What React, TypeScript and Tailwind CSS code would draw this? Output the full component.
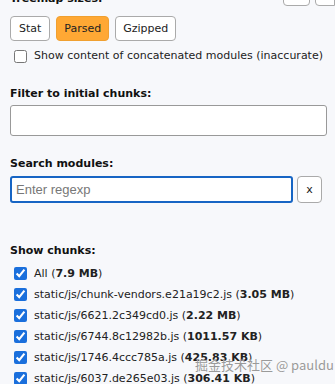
import React from 'react';

const chunks = [
  { label: 'All', size: '7.9 MB' },
  { label: 'static/js/chunk-vendors.e21a19c2.js', size: '3.05 MB' },
  { label: 'static/js/6621.2c349cd0.js', size: '2.22 MB' },
  { label: 'static/js/6744.8c12982b.js', size: '1011.57 KB' },
  { label: 'static/js/1746.4ccc785a.js', size: '425.83 KB' },
  { label: 'static/js/6037.de265e03.js', size: '306.41 KB' },
];

function Heading({ children }: { children: React.ReactNode }) {
  return <div className="font-bold text-[#111]">{children}</div>;
}

export default function App() {
  return (
    <div className="relative h-[384px] w-[335px] overflow-hidden bg-[#f7f8fb] px-[10px] font-['DejaVu_Sans',sans-serif] text-[11px] leading-[14px] text-[#222]">
      <div className="-mt-[16px] flex items-end justify-between">
        <Heading>Treemap sizes:</Heading>
        <div className="-mr-[10px] flex gap-[5px]">
          <div className="h-[22px] w-[27px] rounded-[4px] border border-[#aaa] bg-white" />
          <div className="h-[22px] w-[20px] rounded-l-[4px] border border-[#aaa] bg-white" />
        </div>
      </div>

      <div className="mt-[10px] flex gap-[6px]">
        <button className="h-[25px] rounded-[4px] border border-[#aaa] bg-white px-[8px] text-[#222]">Stat</button>
        <button className="h-[25px] rounded-[4px] border border-[#f0a030] bg-[#ffa834] px-[7px] text-[#222]">Parsed</button>
        <button className="h-[25px] rounded-[4px] border border-[#aaa] bg-white px-[7px] text-[#222]">Gzipped</button>
      </div>

      <label className="mt-[8px] flex items-center gap-[7px] pl-[4px]">
        <input type="checkbox" className="m-0 h-[13px] w-[13px]" />
        <span>Show content of concatenated modules (inaccurate)</span>
      </label>

      <div className="mt-[24px]">
        <Heading>Filter to initial chunks:</Heading>
        <input className="mt-[4px] h-[31px] w-[317px] rounded-[3px] border border-[#999] bg-white px-[5px]" />
      </div>

      <div className="mt-[21px]">
        <Heading>Search modules:</Heading>
        <div className="mt-[5px] flex gap-[4px]">
          <input
            placeholder="Enter regexp"
            className="h-[27px] w-[283px] rounded-[3px] border-2 border-[#1765c4] bg-white px-[4px] font-['Liberation_Sans',sans-serif] text-[13px] placeholder:text-[#777] focus:outline-none"
          />
          <button className="h-[27px] w-[25px] rounded-[4px] border border-[#aaa] bg-white text-[11px] text-[#222]">x</button>
        </div>
      </div>

      <div className="mt-[41px]">
        <Heading>Show chunks:</Heading>
        <div className="mt-[5px] flex flex-col">
          {chunks.map((c) => (
            <label key={c.label} className="flex h-[21px] items-center gap-[7px] pl-[4px]">
              <input type="checkbox" defaultChecked className="m-0 h-[13px] w-[13px] accent-[#1a6fdc]" />
              <span>
                {c.label} (<b>{c.size}</b>)
              </span>
            </label>
          ))}
        </div>
      </div>

      <div className="absolute left-[195px] top-[357px] font-['Noto_Sans_CJK_SC',sans-serif] text-[13px] leading-[16px] text-[#9a9a9a] [text-shadow:0_0_1px_#fff]">
        掘金技术社区 @ pauldu
      </div>
    </div>
  );
}
